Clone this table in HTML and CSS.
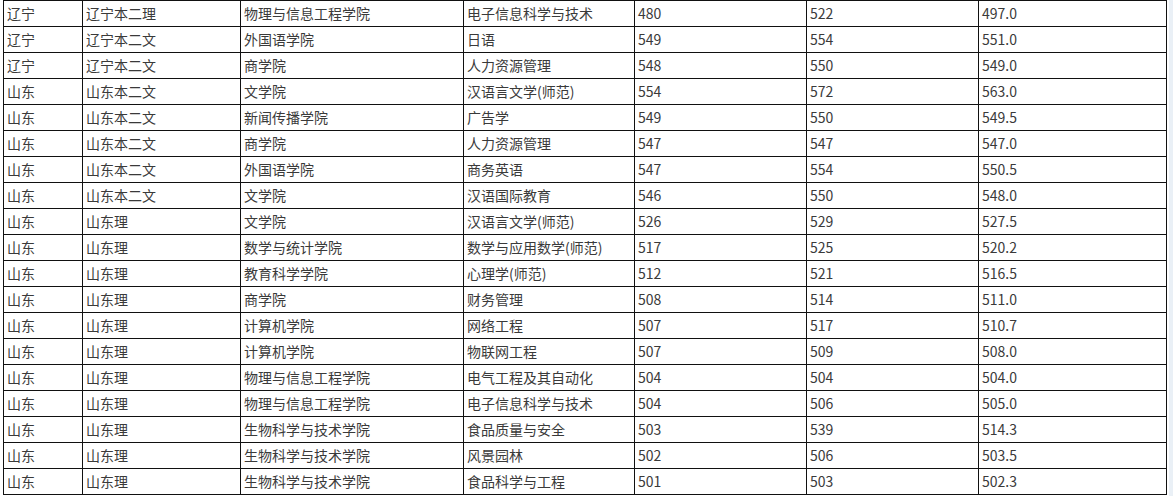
FILE: index.html
```html
<!DOCTYPE html>
<html lang="zh-CN">
<head>
<meta charset="utf-8">
<title>录取分数</title>
<link rel="stylesheet" href="styles.css">
</head>
<body>
<div class="page">
<table class="scores">
<colgroup>
<col class="c1"><col class="c2"><col class="c3"><col class="c4"><col class="c5"><col class="c6"><col class="c7">
</colgroup>
<tbody>
<tr><td>辽宁</td><td>辽宁本二理</td><td>物理与信息工程学院</td><td>电子信息科学与技术</td><td>480</td><td>522</td><td>497.0</td></tr>
<tr><td>辽宁</td><td>辽宁本二文</td><td>外国语学院</td><td>日语</td><td>549</td><td>554</td><td>551.0</td></tr>
<tr><td>辽宁</td><td>辽宁本二文</td><td>商学院</td><td>人力资源管理</td><td>548</td><td>550</td><td>549.0</td></tr>
<tr><td>山东</td><td>山东本二文</td><td>文学院</td><td>汉语言文学(师范)</td><td>554</td><td>572</td><td>563.0</td></tr>
<tr><td>山东</td><td>山东本二文</td><td>新闻传播学院</td><td>广告学</td><td>549</td><td>550</td><td>549.5</td></tr>
<tr><td>山东</td><td>山东本二文</td><td>商学院</td><td>人力资源管理</td><td>547</td><td>547</td><td>547.0</td></tr>
<tr><td>山东</td><td>山东本二文</td><td>外国语学院</td><td>商务英语</td><td>547</td><td>554</td><td>550.5</td></tr>
<tr><td>山东</td><td>山东本二文</td><td>文学院</td><td>汉语国际教育</td><td>546</td><td>550</td><td>548.0</td></tr>
<tr><td>山东</td><td>山东理</td><td>文学院</td><td>汉语言文学(师范)</td><td>526</td><td>529</td><td>527.5</td></tr>
<tr><td>山东</td><td>山东理</td><td>数学与统计学院</td><td>数学与应用数学(师范)</td><td>517</td><td>525</td><td>520.2</td></tr>
<tr><td>山东</td><td>山东理</td><td>教育科学学院</td><td>心理学(师范)</td><td>512</td><td>521</td><td>516.5</td></tr>
<tr><td>山东</td><td>山东理</td><td>商学院</td><td>财务管理</td><td>508</td><td>514</td><td>511.0</td></tr>
<tr><td>山东</td><td>山东理</td><td>计算机学院</td><td>网络工程</td><td>507</td><td>517</td><td>510.7</td></tr>
<tr><td>山东</td><td>山东理</td><td>计算机学院</td><td>物联网工程</td><td>507</td><td>509</td><td>508.0</td></tr>
<tr><td>山东</td><td>山东理</td><td>物理与信息工程学院</td><td>电气工程及其自动化</td><td>504</td><td>504</td><td>504.0</td></tr>
<tr><td>山东</td><td>山东理</td><td>物理与信息工程学院</td><td>电子信息科学与技术</td><td>504</td><td>506</td><td>505.0</td></tr>
<tr><td>山东</td><td>山东理</td><td>生物科学与技术学院</td><td>食品质量与安全</td><td>503</td><td>539</td><td>514.3</td></tr>
<tr><td>山东</td><td>山东理</td><td>生物科学与技术学院</td><td>风景园林</td><td>502</td><td>506</td><td>503.5</td></tr>
<tr><td>山东</td><td>山东理</td><td>生物科学与技术学院</td><td>食品科学与工程</td><td>501</td><td>503</td><td>502.3</td></tr>
</tbody>
</table>
<div class="gutter"></div>
</div>
</body>
</html>
```

FILE: styles.css
```css
html, body {
  margin: 0;
  padding: 0;
  background: #ffffff;
}
body {
  width: 1173px;
  height: 496px;
  overflow: hidden;
}
.page {
  display: flex;
  align-items: flex-start;
  padding-left: 3px;
  height: 496px;
}
.scores {
  border-collapse: collapse;
  table-layout: fixed;
  font-family: "Noto Sans CJK SC", "Noto Sans", sans-serif;
  font-size: 14px;
  color: #3a3a3a;
  flex: none;
}
.c1 { width: 79px; }
.c2 { width: 158px; }
.c3 { width: 223px; }
.c4 { width: 171px; }
.c5 { width: 172px; }
.c6 { width: 172px; }
.c7 { width: 188px; }
.scores td {
  border: 1px solid #111111;
  height: 25px;
  padding: 0 0 0 3px;
  line-height: 25px;
  white-space: nowrap;
  vertical-align: middle;
}
.gutter {
  margin-left: 2px;
  width: 4px;
  height: 496px;
  background: #eaf0f6;
  flex: none;
}
```
